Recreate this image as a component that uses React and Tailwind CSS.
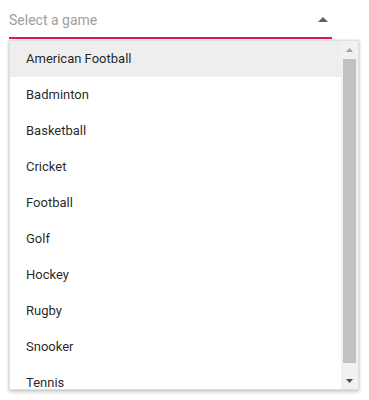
import { useState } from "react";

const games = [
  "American Football",
  "Badminton",
  "Basketball",
  "Cricket",
  "Football",
  "Golf",
  "Hockey",
  "Rugby",
  "Snooker",
  "Tennis",
];

const App = () => {
  const [active, setActive] = useState(0);

  return (
    <div className="w-[369px] h-[400px] bg-white pl-[9px] font-['Roboto',sans-serif]">
      {/* input */}
      <div className="w-[323px] h-[39px] border-b-2 border-[#e3165b] pt-[4px] flex items-center justify-between">
        <span className="text-[14px] text-[#9e9e9e]">Select a game</span>
        <svg width="10" height="5" viewBox="0 0 10 5" className="mr-[4px] mt-[-3px]">
          <path d="M0 5 L5 0 L10 5 Z" fill="#5f5f5f" />
        </svg>
      </div>

      {/* popup */}
      <div className="mt-[1px] w-[350px] h-[350px] border border-[#e0e0e0] bg-white flex shadow-[0_2px_4px_rgba(0,0,0,0.2),0_0_2px_rgba(0,0,0,0.15)]">
        <ul className="w-[331px] overflow-hidden">
          {games.map((g, i) => (
            <li
              key={g}
              onClick={() => setActive(i)}
              className={
                "h-[36px] pl-[16px] flex items-center text-[13px] text-[rgba(0,0,0,0.87)] " +
                (i === active ? "bg-[#eeeeee]" : "bg-white")
              }
            >
              {g}
            </li>
          ))}
        </ul>

        {/* scrollbar */}
        <div className="w-[17px] bg-[#f1f1f1] flex flex-col">
          <div className="h-[17px] flex items-center justify-center">
            <svg width="7" height="4" viewBox="0 0 7 4">
              <path d="M0 4 L3.5 0 L7 4 Z" fill="#a3a3a3" />
            </svg>
          </div>
          <div className="mt-[1px] mx-[2px] h-[304px] bg-[#c1c1c1]" />
          <div className="flex-1" />
          <div className="h-[17px] flex items-center justify-center">
            <svg width="7" height="4" viewBox="0 0 7 4">
              <path d="M0 0 L3.5 4 L7 0 Z" fill="#505050" />
            </svg>
          </div>
        </div>
      </div>
    </div>
  );
};

export default App;
